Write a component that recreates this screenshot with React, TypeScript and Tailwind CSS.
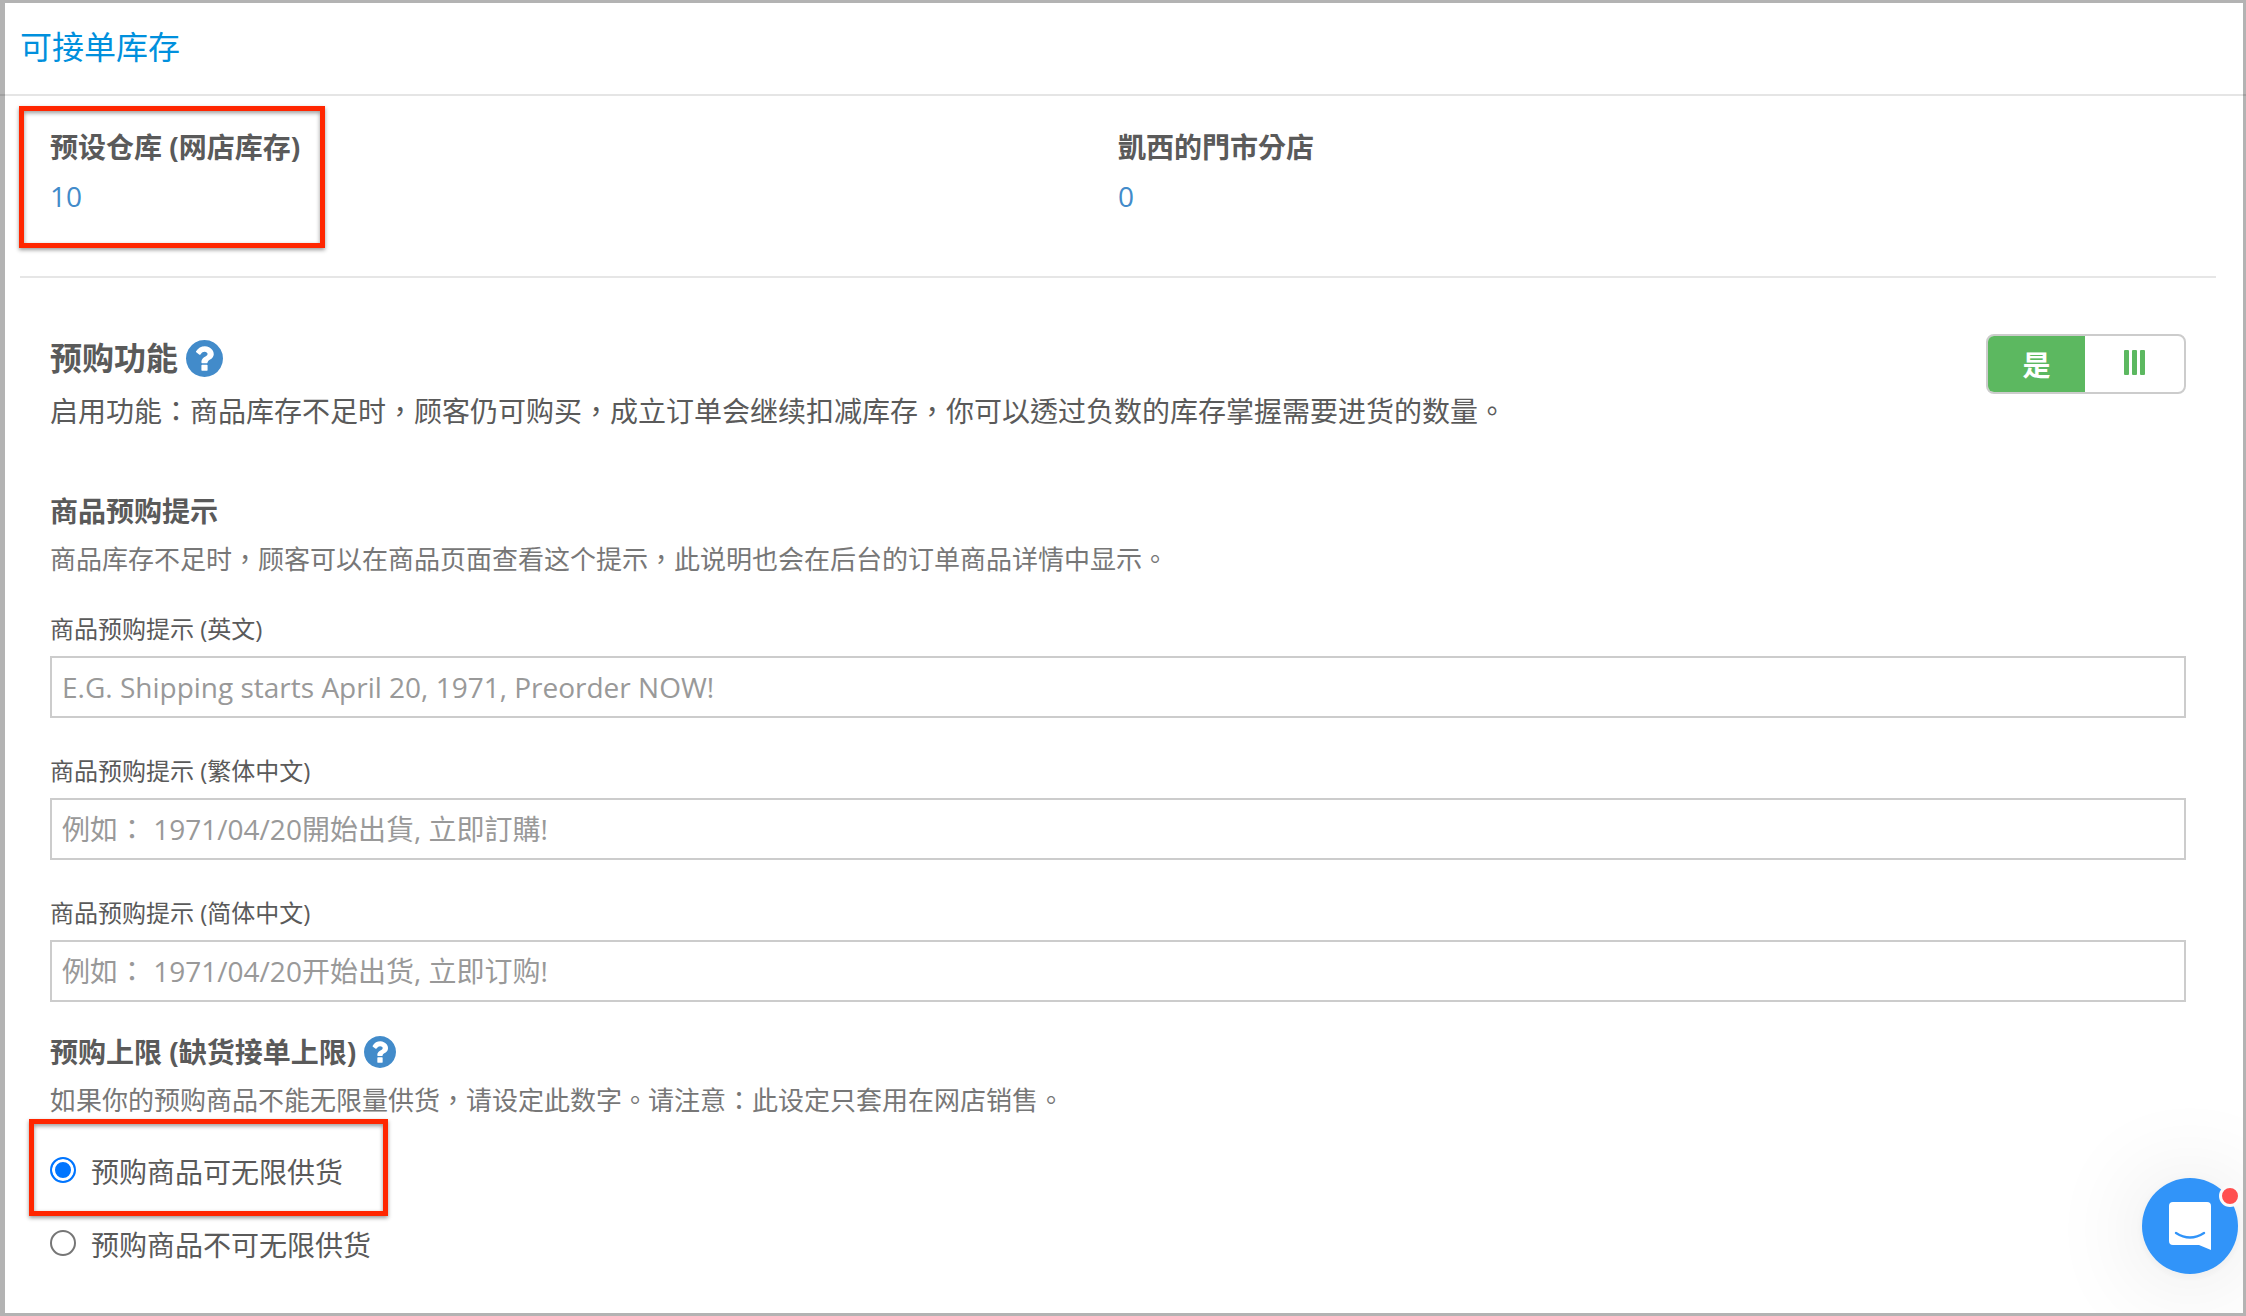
import { useState } from "react";

const stocks = [
  { id: "default", name: "预设仓库 (网店库存)", qty: 10, marked: true },
  { id: "branch", name: "凱西的門市分店", qty: 0, marked: false },
];

const hints = [
  { id: "hint-en", label: "商品预购提示 (英文)", placeholder: "E.G. Shipping starts April 20, 1971, Preorder NOW!" },
  { id: "hint-hant", label: "商品预购提示 (繁体中文)", placeholder: "例如： 1971/04/20開始出貨, 立即訂購!" },
  { id: "hint-hans", label: "商品预购提示 (简体中文)", placeholder: "例如： 1971/04/20开始出货, 立即订购!" },
];

const limits = [
  { id: "unlimited", label: "预购商品可无限供货", marked: true },
  { id: "limited", label: "预购商品不可无限供货", marked: false },
];

export default function App() {
  const [limit, setLimit] = useState("unlimited");

  return (
    <div className="min-h-screen border-t-[3px] border-r-[3px] border-b-[3px] border-l-[5px] border-[#b3b3b3] bg-white font-['Open_Sans','Noto_Sans_CJK_TC',sans-serif] text-[28px] leading-10 text-[#5a5a5a]">
      <header className="-mr-[3px] -ml-[5px] border-b-2 border-black/10 px-5 pt-[18px] pb-[22px]">
        <h1 className="text-[32px] leading-[51px] text-[#0090dd]">可接单库存</h1>
      </header>

      <main className="pr-[27px] pl-[15px]">
        <section className="grid grid-cols-2 border-b-2 border-[#e6e6e6] pt-[26px] pr-[30px] pb-[56px] pl-[30px]">
          {stocks.map((s) => (
            <div key={s.id} className="relative">
              <h2 className="leading-[50px] font-bold">{s.name}</h2>
              <a href={`#${s.id}`} className="block w-fit leading-[48px] text-[#428bca]">{s.qty}</a>
              {s.marked && <Marker className="-top-4 -left-[31px] h-[142px] w-[306px]" />}
            </div>
          ))}
        </section>

        <section className="px-[30px] pt-14">
          <div className="flex items-start justify-between">
            <div>
              <h2 className="flex items-center gap-2 text-[32px] leading-[48px] font-bold">
                预购功能
                <HelpButton label="预购功能说明" className="size-[37px]" />
              </h2>
              <p className="mt-[9px]">启用功能：商品库存不足时，顾客仍可购买，成立订单会继续扣减库存，你可以透过负数的库存掌握需要进货的数量。</p>
            </div>
            <Toggle />
          </div>

          <h3 className="mt-[60px] font-bold">商品预购提示</h3>
          <p className="mt-2 text-[26px] text-[#777]">商品库存不足时，顾客可以在商品页面查看这个提示，此说明也会在后台的订单商品详情中显示。</p>

          <div className="mt-[34px] flex flex-col gap-[37px]">
            {hints.map((h) => (
              <div key={h.id}>
                <label htmlFor={h.id} className="block text-2xl leading-8">{h.label}</label>
                <input
                  id={h.id}
                  type="text"
                  placeholder={h.placeholder}
                  className="mt-[11px] block h-[62px] w-full border-2 border-[#ccc] px-2.5 placeholder:text-[#999]"
                />
              </div>
            ))}
          </div>

          <h3 className="mt-[30px] flex items-center gap-2 font-bold">
            预购上限 (缺货接单上限)
            <HelpButton label="预购上限说明" className="size-8" />
          </h3>
          <p className="mt-2 text-[26px] text-[#777]">如果你的预购商品不能无限量供货，请设定此数字。请注意：此设定只套用在网店销售。</p>

          <div className="mt-8 flex flex-col gap-[33px]">
            {limits.map((l) => (
              <div key={l.id} className="relative flex">
                <label className="flex items-center gap-[15px]">
                  <input
                    type="radio"
                    name="limit"
                    checked={limit === l.id}
                    onChange={() => setLimit(l.id)}
                    className="mb-1 size-[26px] appearance-none rounded-full border-2 border-[#767676] bg-white checked:border-[#0075ff] checked:bg-[#0075ff] checked:shadow-[inset_0_0_0_3px_#fff]"
                  />
                  {l.label}
                </label>
                {l.marked && <Marker className="-top-[33px] -left-[21px] h-[97px] w-[359px]" />}
              </div>
            ))}
          </div>
        </section>
      </main>

      <ChatLauncher />
    </div>
  );
}

function Marker({ className }: { className: string }) {
  return (
    <div
      className={`pointer-events-none absolute border-[5px] border-[#ff2600] shadow-[0_2px_4px_rgba(0,0,0,0.4),inset_0_2px_4px_rgba(0,0,0,0.4)] ${className}`}
    />
  );
}

function HelpButton({ label, className }: { label: string; className: string }) {
  return (
    <button type="button" aria-label={label} className="text-[#428bca]">
      <svg viewBox="0 0 1536 1536" fill="currentColor" className={className}>
        <path d="M896 1248v-192q0-14-9-23t-23-9h-192q-14 0-23 9t-9 23v192q0 14 9 23t23 9h192q14 0 23-9t9-23zM1152 576q0-88-55.5-163t-138.5-116t-170-41q-243 0-371 213q-15 24 8 42l132 100q7 6 19 6q16 0 25-12q53-68 86-92q34-24 86-24q48 0 85.5 26t37.5 59q0 38-20 61t-68 45q-63 28-115.5 86.5t-52.5 125.5v36q0 14 9 23t23 9h192q14 0 23-9t9-23q0-19 21.5-49.5t54.5-49.5q32-18 49-28.5t46-35t44.5-48t28-60.5t12.5-81zM1536 768q0 209-103 385.5t-279.5 279.5t-385.5 103t-385.5-103t-279.5-279.5t-103-385.5t103-385.5t279.5-279.5t385.5-103t385.5 103t279.5 279.5t103 385.5z" />
      </svg>
    </button>
  );
}

function Toggle() {
  const [on, setOn] = useState(true);
  return (
    <button
      type="button"
      role="switch"
      aria-checked={on}
      aria-label="预购功能"
      onClick={() => setOn(!on)}
      className={`flex h-[60px] w-[200px] shrink-0 overflow-hidden rounded-lg border-2 border-[#ccc] ${on ? "" : "flex-row-reverse"}`}
    >
      <span className={`flex h-full w-[97px] items-center justify-center pt-0.5 font-bold text-white ${on ? "bg-[#5cb860]" : "bg-gray-400"}`}>
        {on ? "是" : "否"}
      </span>
      <span className="flex h-full flex-1 items-center justify-center gap-[3px] pb-1">
        <span className="h-[25px] w-[5px] rounded-[1px] bg-[#5cb860]" />
        <span className="h-[25px] w-[5px] rounded-[1px] bg-[#5cb860]" />
        <span className="h-[25px] w-[5px] rounded-[1px] bg-[#5cb860]" />
      </span>
    </button>
  );
}

function ChatLauncher() {
  return (
    <div className="pointer-events-none fixed right-[3px] bottom-[3px] h-60 w-80 overflow-hidden">
      <button
        type="button"
        aria-label="Chat"
        className="pointer-events-auto absolute right-[5px] bottom-[39px] size-24 rounded-full bg-[#3194f9] shadow-[0_2px_12px_rgba(0,0,0,0.05),0_4px_100px_rgba(0,0,0,0.12)]"
      >
        <svg viewBox="0 0 96 96" className="size-24">
          <path d="M31 24h34a4 4 0 0 1 4 4v44l-12-5H31a4 4 0 0 1-4-4V28a4 4 0 0 1 4-4z" fill="#fff" />
          <path d="M34 55q14 9 28 0" fill="none" stroke="#3194f9" strokeWidth="2.4" strokeLinecap="round" />
        </svg>
        <span className="absolute top-[7px] -right-[3px] size-[22px] rounded-full border-[3px] border-[#fafafa] bg-[#ff4f4f]" />
      </button>
    </div>
  );
}
